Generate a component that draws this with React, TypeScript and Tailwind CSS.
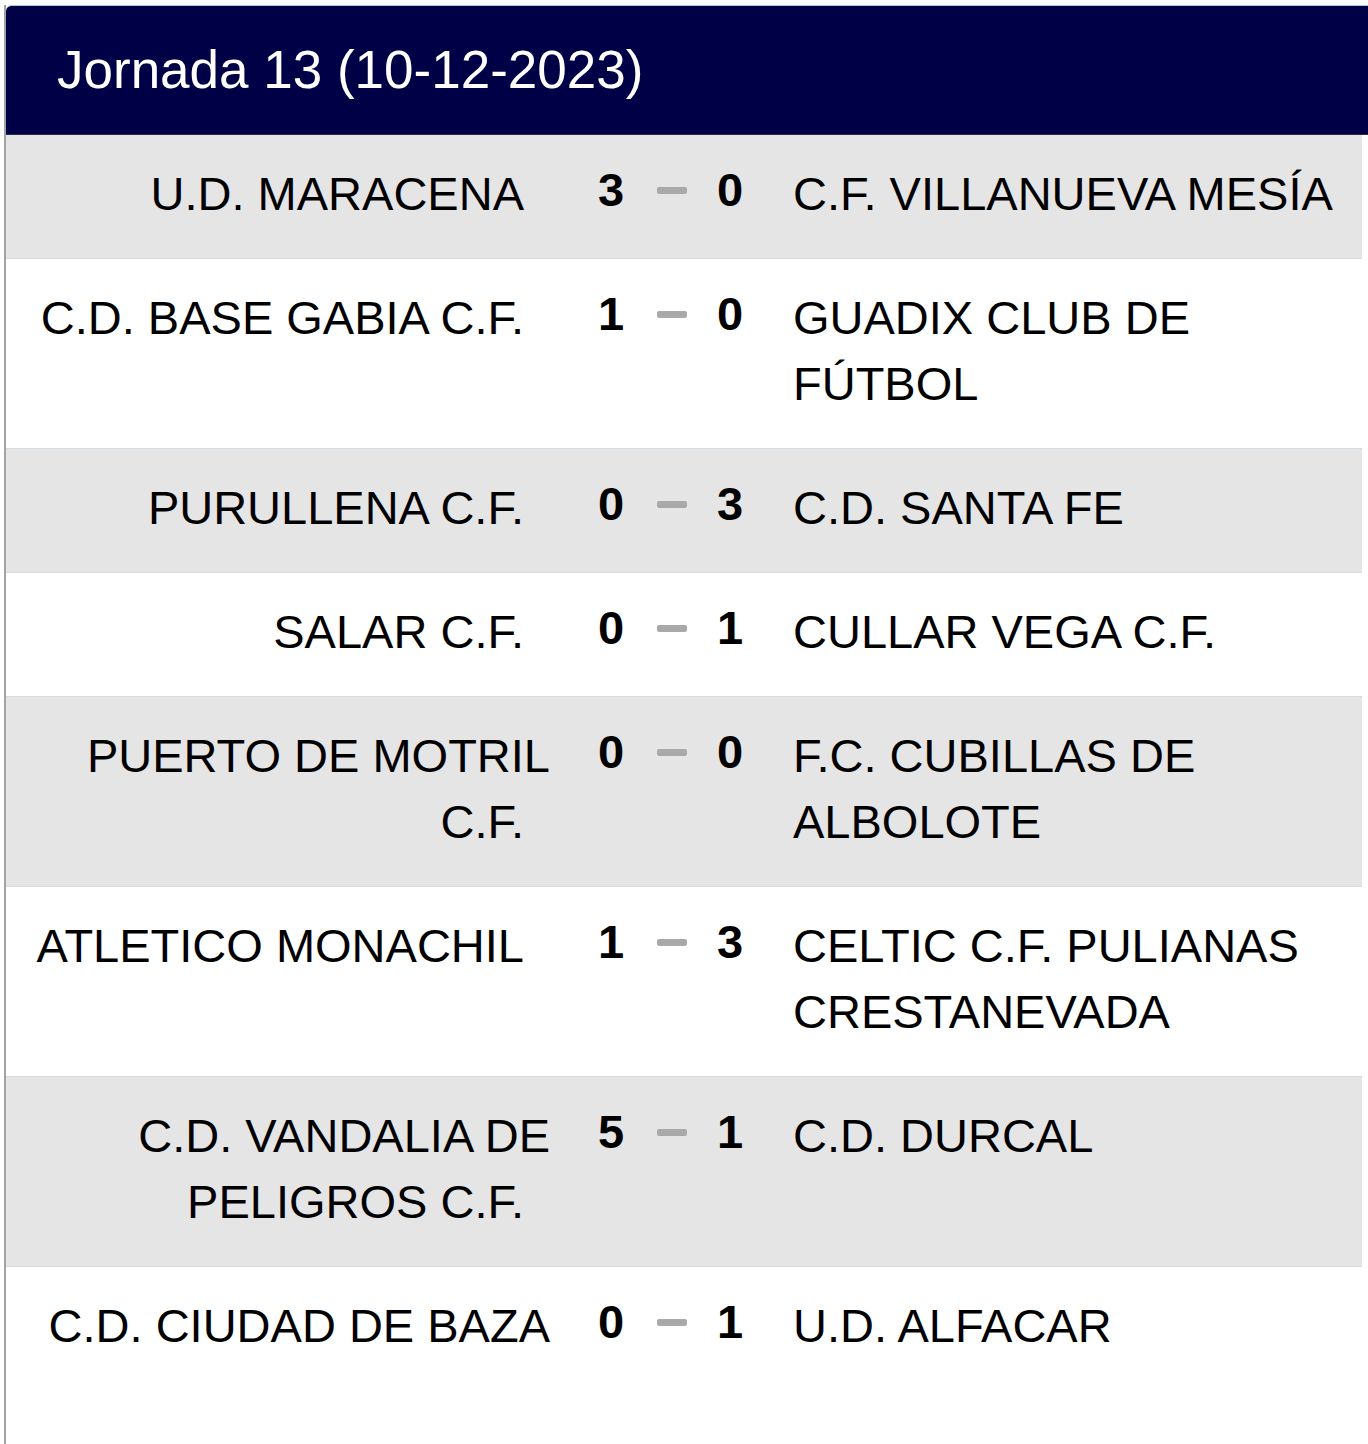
const MATCHES: {
  home: string[];
  away: string[];
  hs: number;
  as: number;
  flush?: boolean;
}[] = [
  { home: ["U.D. MARACENA"], away: ["C.F. VILLANUEVA MESÍA"], hs: 3, as: 0 },
  { home: ["C.D. BASE GABIA C.F."], away: ["GUADIX CLUB DE", "FÚTBOL"], hs: 1, as: 0 },
  { home: ["PURULLENA C.F."], away: ["C.D. SANTA FE"], hs: 0, as: 3 },
  { home: ["SALAR C.F."], away: ["CULLAR VEGA C.F."], hs: 0, as: 1 },
  { home: ["PUERTO DE MOTRIL", "C.F."], away: ["F.C. CUBILLAS DE", "ALBOLOTE"], hs: 0, as: 0 },
  { home: ["ATLETICO MONACHIL"], away: ["CELTIC C.F. PULIANAS", "CRESTANEVADA"], hs: 1, as: 3 },
  { home: ["C.D. VANDALIA DE", "PELIGROS C.F."], away: ["C.D. DURCAL"], hs: 5, as: 1 },
  { home: ["C.D. CIUDAD DE BAZA"], away: ["U.D. ALFACAR"], hs: 0, as: 1, flush: true },
];

function MatchRow({
  m,
  shaded,
  last,
}: {
  m: (typeof MATCHES)[number];
  shaded: boolean;
  last: boolean;
}) {
  return (
    <div
      className={`flex items-start pt-[26px] pb-[31px] ${
        last ? "" : "border-b border-[#d3dbe3]"
      } ${shaded ? "bg-[#e5e5e5]" : "bg-white"}`}
    >
      <div className="w-[544px] shrink-0 text-right">
        {m.home.map((line, i) => {
          const end = i === m.home.length - 1;
          return (
            <div
              key={i}
              className={`whitespace-nowrap ${end && !m.flush ? "pr-[26px]" : ""}`}
            >
              {line}
            </div>
          );
        })}
      </div>
      <div className="ml-[31px] -mt-[4px] flex items-center font-bold">
        <div className="w-[60px] text-center">{m.hs}</div>
        <div className="ml-[16px] h-[7px] w-[30px] rounded-[2px] bg-[#a9a9a9]" />
        <div className="ml-[13px] w-[60px] text-center">{m.as}</div>
      </div>
      <div className="ml-[33px]">
        {m.away.map((line, i) => (
          <div key={i} className="whitespace-nowrap">
            {line}
          </div>
        ))}
      </div>
    </div>
  );
}

export default function App() {
  return (
    <div className="min-h-[1444px] bg-white pt-[5px] font-['Liberation_Sans',Arial,sans-serif] text-black">
      <div className="ml-[4px] min-h-[1439px] border-l-2 border-[#a3a3a3]">
        <div className="flex h-[130px] items-center rounded-tl-[6px] border-t border-b border-t-[#a9c8e6] border-b-[#2a2a3a] bg-[#000046] pl-[51px] text-[53px] text-white">
          Jornada 13 (10-12-2023)
        </div>
        <div className="w-[1356px] text-[47px] leading-[66px]">
          {MATCHES.map((m, i) => (
            <MatchRow
              key={i}
              m={m}
              shaded={i % 2 === 0}
              last={i === MATCHES.length - 1}
            />
          ))}
        </div>
      </div>
    </div>
  );
}
